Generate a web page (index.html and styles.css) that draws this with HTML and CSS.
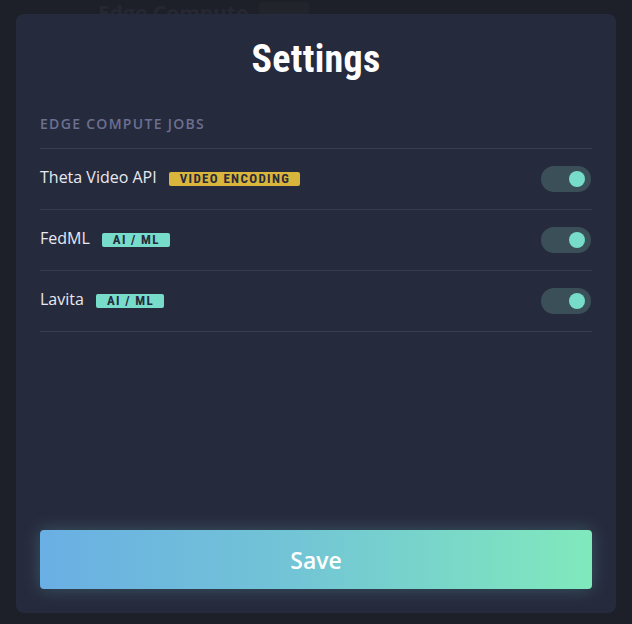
FILE: index.html
```html
<!DOCTYPE html>
<html lang="en">
<head>
<meta charset="utf-8">
<title>Settings</title>
<link rel="stylesheet" href="styles.css">
</head>
<body>
<div class="page">
  <header class="page-header">
    <h1 class="page-title">Edge Compute</h1>
    <span class="page-pill"></span>
  </header>
</div>

<div class="modal">
  <h2 class="modal-title">Settings</h2>
  <div class="section-label">EDGE COMPUTE JOBS</div>
  <ul class="job-list">
    <li class="job-row">
      <div class="job-info">
        <span class="job-name">Theta Video API</span>
        <span class="badge badge-yellow">VIDEO ENCODING</span>
      </div>
      <span class="toggle on"><span class="knob"></span></span>
    </li>
    <li class="job-row">
      <div class="job-info">
        <span class="job-name">FedML</span>
        <span class="badge badge-teal">AI / ML</span>
      </div>
      <span class="toggle on"><span class="knob"></span></span>
    </li>
    <li class="job-row">
      <div class="job-info">
        <span class="job-name">Lavita</span>
        <span class="badge badge-teal">AI / ML</span>
      </div>
      <span class="toggle on"><span class="knob"></span></span>
    </li>
  </ul>
  <button class="save-btn">Save</button>
</div>
</body>
</html>
```

FILE: styles.css
```css
html, body {
  margin: 0;
  padding: 0;
}
body {
  width: 632px;
  height: 624px;
  overflow: hidden;
  background: #1e2029;
  font-family: "Open Sans", "Noto Sans", sans-serif;
}
.page-header {
  display: flex;
  align-items: center;
  gap: 11px;
  padding: 0 0 0 98px;
  height: 40px;
  margin-top: -7px;
}
.page-title {
  margin: 0;
  font-size: 21px;
  font-weight: 700;
  color: #252833;
  line-height: 30px;
}
.page-pill {
  width: 50px;
  height: 22px;
  border-radius: 4px;
  background: #22242c;
}
.modal {
  position: fixed;
  left: 16px;
  top: 14px;
  width: 600px;
  height: 599px;
  box-sizing: border-box;
  padding: 23px 24px 24px;
  background: #262a3d;
  border-radius: 8px;
  display: flex;
  flex-direction: column;
}
.modal-title {
  margin: 0;
  text-align: center;
  font-family: "Liberation Sans Narrow", "Roboto Condensed", "Open Sans", sans-serif;
  font-size: 38px;
  line-height: 44px;
  font-weight: 700;
  color: #ffffff;
  letter-spacing: 0.3px;
}
.section-label {
  margin-top: 33px;
  font-size: 14px;
  line-height: 20px;
  font-weight: 600;
  letter-spacing: 1.3px;
  color: #6c7090;
  padding-bottom: 14px;
  border-bottom: 1px solid #393c50;
}
.job-list {
  list-style: none;
  margin: 0;
  padding: 0;
}
.job-row {
  height: 60px;
  display: flex;
  align-items: center;
  justify-content: space-between;
  border-bottom: 1px solid #393c50;
}
.job-info {
  display: flex;
  align-items: center;
  gap: 12px;
}
.job-name {
  font-size: 16px;
  line-height: 20px;
  padding-bottom: 4px;
  color: #e8e9f0;
}
.badge {
  display: inline-flex;
  align-items: center;
  height: 14px;
  padding: 0 10px 0 11px;
  border-radius: 2px;
  font-family: "Roboto Condensed", "Liberation Sans Narrow", "Open Sans", sans-serif;
  font-size: 13px;
  font-weight: 700;
  letter-spacing: 1.35px;
  color: #262a3d;
  line-height: 14px;
}
.badge-yellow {
  background: #d9b53b;
}
.badge-teal {
  background: #78dccb;
}
.toggle {
  width: 50px;
  height: 26px;
  border-radius: 13px;
  background: #3b4f58;
  display: flex;
  align-items: center;
  justify-content: flex-end;
  padding: 0 6px;
  box-sizing: border-box;
  margin-right: 1px;
}
.knob {
  width: 16px;
  height: 16px;
  border-radius: 50%;
  background: #78dccb;
}
.save-btn {
  margin-top: auto;
  height: 59px;
  width: 100%;
  border: none;
  border-radius: 4px;
  background: linear-gradient(90deg, #6aafe4 0%, #72c4d6 45%, #80e9bc 100%);
  box-shadow: 0 0 18px rgba(110, 210, 200, 0.28);
  color: #ffffff;
  font-family: "Open Sans", "Noto Sans", sans-serif;
  font-size: 23px;
  font-weight: 600;
}
```
